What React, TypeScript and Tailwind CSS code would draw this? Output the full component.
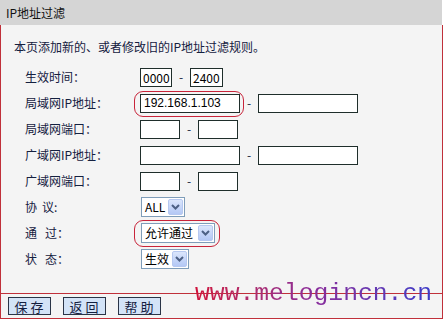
import React from "react";

const cjk = { fontFamily: '"Noto Sans CJK SC", "Liberation Sans", sans-serif' } as const;

function Box({ w }: { w: string }) {
  return <div className={`${w} h-[19px] bg-white border border-[#1f2e2b]`} />;
}

function Select({ text, w }: { text: string; w: string }) {
  return (
    <div className={`${w} h-[20px] bg-white border border-[#7f9db9] flex items-center justify-between pl-[3px] pr-[1px]`}>
      <span className="text-[12px] text-black leading-none">{text}</span>
      <span className="w-[15px] h-[16px] rounded-[2px] bg-gradient-to-b from-[#dbe6fc] to-[#b4c8f5] border border-[#b6c8f0] flex items-center justify-center">
        <svg width="9" height="6" viewBox="0 0 9 6">
          <path d="M1 1 L4.5 4.5 L8 1" stroke="#4d6185" strokeWidth="2" fill="none" />
        </svg>
      </span>
    </div>
  );
}

function Row({ label, children }: { label: React.ReactNode; children: React.ReactNode }) {
  return (
    <div className="flex items-center h-[26px]">
      <div className="w-[115px] text-[12px] text-[#14203f] flex items-center">{label}</div>
      <div className="flex items-center">{children}</div>
    </div>
  );
}

function Dash() {
  return <span className="w-[18px] text-center text-[12px] text-[#14203f]">-</span>;
}

function Btn({ t }: { t: string }) {
  return (
    <div className="w-[43px] h-[18px] bg-[#d3e3f7] border border-[#2a3446] flex items-center justify-center text-[13px] text-[#14203f] tracking-[3px] leading-none pl-[2px]">
      {t}
    </div>
  );
}

function Spaced({ a, b, gap, colon }: { a: string; b: string; gap: string; colon: string }) {
  return (
    <>
      <span>{a}</span>
      <span className={gap} />
      <span>{b}</span>
      <span>{colon}</span>
    </>
  );
}

export default function App() {
  return (
    <div className="w-[445px] h-[321px] bg-white relative overflow-hidden" style={cjk}>
      <div className="h-[25px] w-[442px] bg-[#d5d5d5] flex items-center pl-[6px] text-[12px] text-[#111]">
        IP地址过滤
      </div>
      <div className="w-[443px] h-[294px] bg-[#f4f4f4] border-l-[1.5px] border-r-[1.5px] border-b-[1.5px] border-[#c0303a] flex flex-col">
        <div className="h-[39px] pl-[13px] pt-[13px] text-[12px] text-[#14203f]">
          本页添加新的、或者修改旧的IP地址过滤规则。
        </div>
        <div className="pl-[24px] flex flex-col">
          <Row label="生效时间：">
            <div className="w-[32px] h-[19px] bg-white border border-[#1f2e2b] text-[12px] leading-[17px] pl-[2px]">0000</div>
            <Dash />
            <div className="w-[33px] h-[19px] bg-white border border-[#1f2e2b] text-[12px] leading-[17px] pl-[2px]">2400</div>
          </Row>
          <Row label="局域网IP地址：">
            <div className="w-[100px] h-[19px] bg-white border border-[#1f2e2b] text-[12px] leading-[17px] pl-[3px]" style={{ fontFamily: '"Liberation Sans", sans-serif' }}>192.168.1.103</div>
            <Dash />
            <Box w="w-[100px]" />
          </Row>
          <Row label="局域网端口：">
            <Box w="w-[40px]" />
            <Dash />
            <Box w="w-[40px]" />
          </Row>
          <Row label="广域网IP地址：">
            <Box w="w-[100px]" />
            <Dash />
            <Box w="w-[100px]" />
          </Row>
          <Row label="广域网端口：">
            <Box w="w-[40px]" />
            <Dash />
            <Box w="w-[40px]" />
          </Row>
          <Row label={<Spaced a="协" b="议" gap="w-[5px]" colon=":" />}>
            <div className="ml-[1px]"><Select text="ALL" w="w-[44px]" /></div>
          </Row>
          <Row label={<Spaced a="通" b="过" gap="w-[8px]" colon="：" />}>
            <div className="ml-[1px]"><Select text="允许通过" w="w-[74px]" /></div>
          </Row>
          <Row label={<Spaced a="状" b="态" gap="w-[8px]" colon="：" />}>
            <div className="ml-[1px]"><Select text="生效" w="w-[48px]" /></div>
          </Row>
        </div>
        <div className="mt-auto h-[25px] border-t-[1.5px] border-[#c0303a] flex items-center gap-[12px] pl-[7px]">
          <Btn t="保存" />
          <Btn t="返回" />
          <Btn t="帮助" />
        </div>
      </div>
      <div className="absolute left-[134px] top-[91px] w-[110px] h-[26px] rounded-[9px] border border-[#c8243a]" />
      <div className="absolute left-[134px] top-[220px] w-[86px] h-[27px] rounded-[9px] border border-[#c8243a]" />
      <div
        className="absolute left-[195px] top-[281px] text-[24.7px] leading-none bg-gradient-to-r from-[#d0103a] via-[#8a2a9a] to-[#3a3ac8] bg-clip-text text-transparent"
        style={{ fontFamily: '"Liberation Mono", monospace' }}
      >
        www.melogincn.cn
      </div>
    </div>
  );
}
